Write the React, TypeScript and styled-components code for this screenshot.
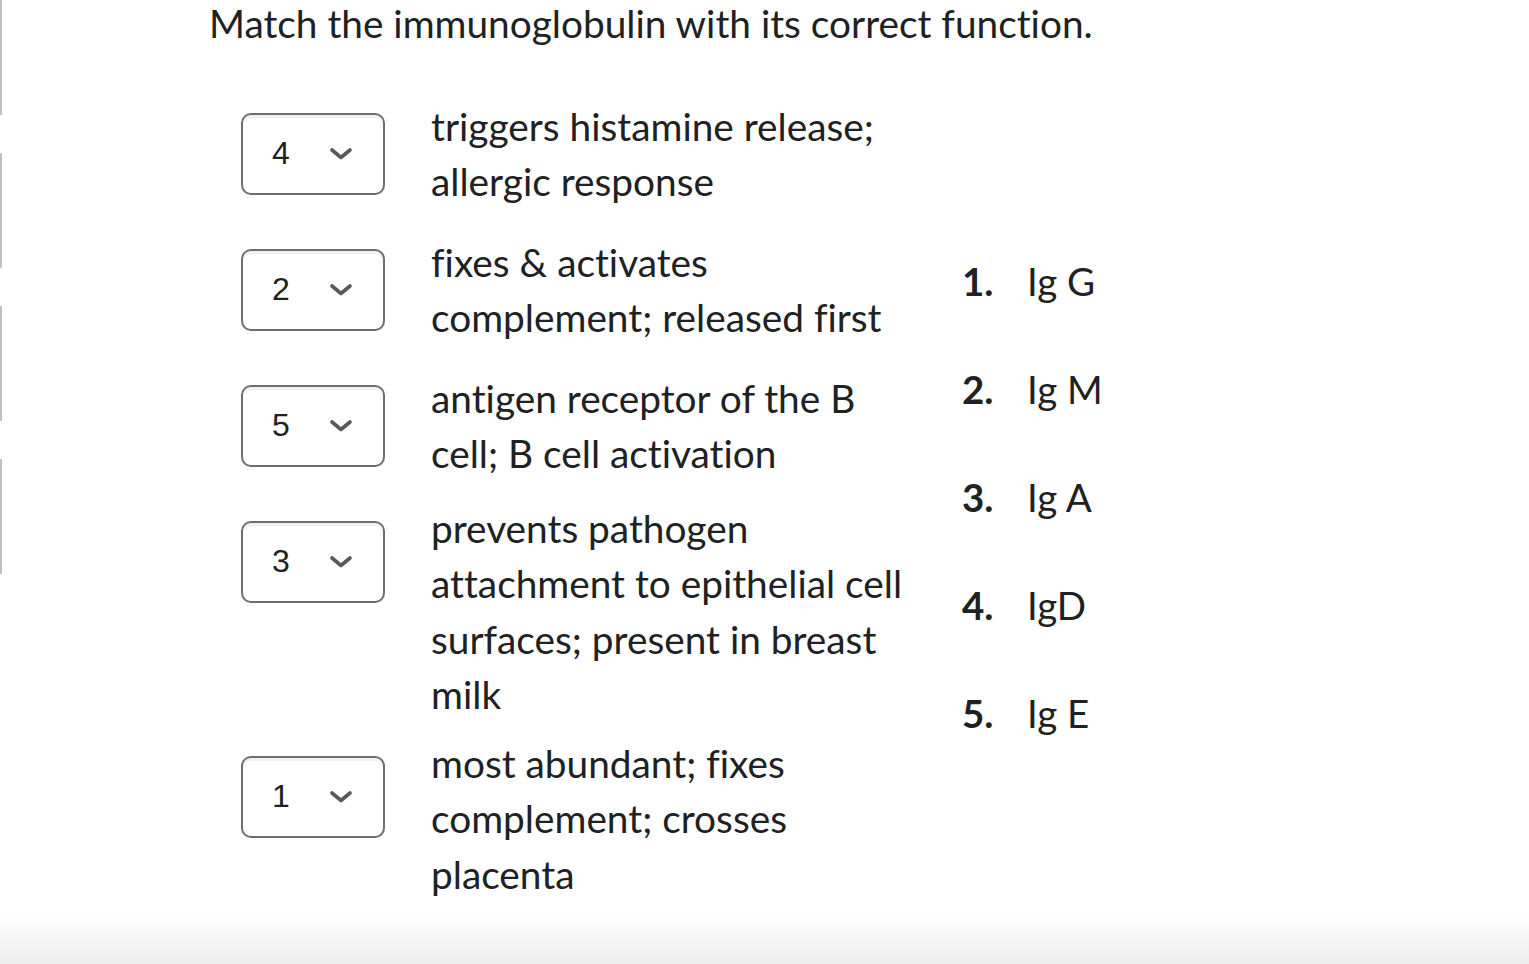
import React from "react";
import styled, { createGlobalStyle } from "styled-components";

const GlobalStyle = createGlobalStyle`
  html, body { margin: 0; padding: 0; background: #ffffff; }
  body {
    font-family: Lato, "Noto Sans", sans-serif;
    color: #202122;
    font-variant-ligatures: none;
    font-feature-settings: "liga" 0, "clig" 0;
  }
  * { box-sizing: border-box; }
`;

const Page = styled.div`
  height: 100vh;
  display: flex;
  flex-direction: column;
  overflow: hidden;
`;

const Top = styled.div`
  flex: 1;
  display: flex;
  min-height: 0;
`;

const Rail = styled.div`
  width: 2px;
  display: flex;
  flex-direction: column;
  gap: 38px;
`;

const RailSegment = styled.div`
  width: 2px;
  height: 115px;
  background: #bcc3c8;
`;

const Content = styled.main`
  padding-left: 207px;
`;

const Title = styled.h1`
  margin: 0;
  font-size: 38.8px;
  font-weight: 400;
  line-height: 46px;
  color: #202122;
`;

const Question = styled.div`
  display: flex;
  align-items: center;
  margin-left: 32px;
  margin-top: 40px;
`;

const Pairs = styled.div`
  display: flex;
  flex-direction: column;
`;

const Row = styled.div`
  display: grid;
  grid-template-columns: 144px 490px;
  column-gap: 46px;
  min-height: 136px;
`;

const SelectBox = styled.div`
  align-self: start;
  margin-top: 26.5px;
  height: 82px;
  border: 2px solid #6c7074;
  border-radius: 10px;
  box-shadow: inset 0 3px 0 #f1f1f1;
  background: #ffffff;
  display: flex;
  align-items: center;
  padding-left: 29px;
  cursor: pointer;
`;

const SelectValue = styled.span`
  font-family: "Liberation Sans", Arial, sans-serif;
  font-size: 32px;
  color: #202122;
  width: 57px;
`;

const Description = styled.div`
  align-self: center;
  padding: 6.5px 0;
  font-size: 38.8px;
  line-height: 55.5px;
  color: #202122;
`;

const Answers = styled.ol`
  list-style: none;
  margin: 0 0 0 41px;
  padding: 0;
`;

const AnswerItem = styled.li`
  height: 108px;
  display: flex;
  align-items: center;
  font-size: 38.5px;
  color: #202122;
`;

const AnswerNum = styled.span`
  font-weight: 700;
  width: 65px;
`;

const Footer = styled.div`
  height: 48px;
  flex-shrink: 0;
  background: linear-gradient(#ffffff, #ececec);
`;

const Chevron = () => (
  <svg width="24" height="13" viewBox="0 0 24 13" aria-hidden="true">
    <polyline
      points="3,3 12,10.5 21,3"
      fill="none"
      stroke="#565a5d"
      strokeWidth="3.6"
      strokeLinecap="round"
      strokeLinejoin="round"
    />
  </svg>
);

const pairs = [
  { value: "4", text: "triggers histamine release; allergic response" },
  { value: "2", text: "fixes & activates complement; released first" },
  { value: "5", text: "antigen receptor of the B cell; B cell activation" },
  { value: "3", text: "prevents pathogen attachment to epithelial cell surfaces; present in breast milk" },
  { value: "1", text: "most abundant; fixes complement; crosses placenta" },
];

const answers = ["Ig G", "Ig M", "Ig A", "IgD", "Ig E"];

export default function App() {
  return (
    <>
      <GlobalStyle />
      <Page>
        <Top>
          <Rail>
            <RailSegment />
            <RailSegment />
            <RailSegment />
            <RailSegment />
          </Rail>
          <Content>
            <Title>Match the immunoglobulin with its correct function.</Title>
            <Question>
              <Pairs>
                {pairs.map((p) => (
                  <Row key={p.value}>
                    <SelectBox role="combobox" aria-label={p.text}>
                      <SelectValue>{p.value}</SelectValue>
                      <Chevron />
                    </SelectBox>
                    <Description>{p.text}</Description>
                  </Row>
                ))}
              </Pairs>
              <Answers>
                {answers.map((a, i) => (
                  <AnswerItem key={a}>
                    <AnswerNum>{i + 1}.</AnswerNum>
                    <span>{a}</span>
                  </AnswerItem>
                ))}
              </Answers>
            </Question>
          </Content>
        </Top>
        <Footer />
      </Page>
    </>
  );
}
